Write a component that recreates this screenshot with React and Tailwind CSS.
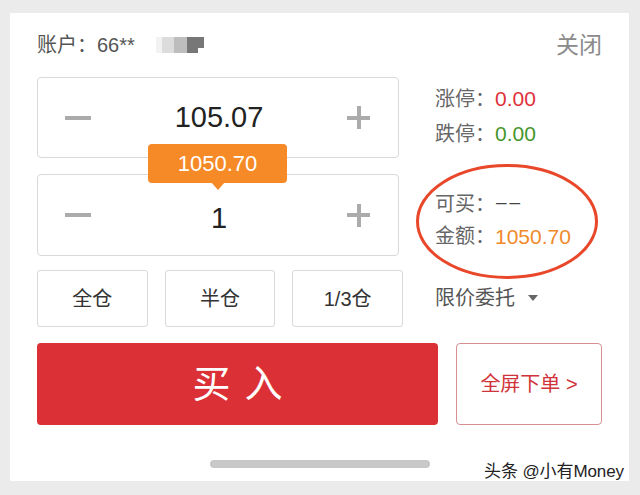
export default function App() {
  const font = { fontFamily: '"Liberation Sans", "Noto Sans CJK SC", sans-serif' };
  return (
    <div className="relative w-[640px] h-[495px] bg-[#ebebeb] pt-[13px] pl-[10px] overflow-hidden" style={font}>
      <div className="w-[619px] h-[468px] bg-white pl-[27px] pr-[27px] pt-[20px]">
        {/* header */}
        <div className="flex items-center h-[24px]">
          <span className="text-[20px] text-[#555] leading-none">账户：66**</span>
          <div className="ml-[21px] flex h-[16px]">
            <div className="w-[6px] bg-[#f2f2f2]" />
            <div className="w-[12px] bg-[#dcdcdc]" />
            <div className="w-[13px] bg-[#bdbdbd]" />
            <div className="w-[17px] bg-[#777] relative">
              <div className="absolute right-0 bottom-0 w-[6px] h-[5px] bg-white" />
            </div>
          </div>
          <span className="ml-auto text-[23px] text-[#8a8a8a] leading-none">关闭</span>
        </div>

        {/* main */}
        <div className="flex mt-[20px]">
          <div className="w-[366px] flex flex-col">
            <div className="relative w-[362px] h-[81px] border border-[#d9d9d9] rounded-[4px] flex items-center">
              <div className="ml-[27px] w-[26px] h-[4px] bg-[#ababab]" />
              <div className="flex-1 text-center text-[29px] text-[#222] leading-none">105.07</div>
              <div className="mr-[28px] relative w-[23px] h-[23px]">
                <div className="absolute left-0 top-[9.5px] w-[23px] h-[4px] bg-[#ababab]" />
                <div className="absolute top-0 left-[9.5px] w-[4px] h-[23px] bg-[#ababab]" />
              </div>
              {/* tooltip */}
              <div className="absolute left-[110px] top-[66px] w-[139px] h-[39px] bg-[#f68a26] rounded-[4px] flex items-center justify-center text-white text-[22px] leading-none z-10">
                1050.70
                <div className="absolute left-[63px] top-[38px] w-0 h-0 border-l-[7px] border-r-[7px] border-t-[8px] border-l-transparent border-r-transparent border-t-[#f68a26]" />
              </div>
            </div>
            <div className="mt-[16px] w-[362px] h-[82px] border border-[#d9d9d9] rounded-[4px] flex items-center">
              <div className="ml-[27px] w-[26px] h-[4px] bg-[#ababab]" />
              <div className="flex-1 text-center text-[29px] text-[#222] leading-none pt-[6px]">1</div>
              <div className="mr-[28px] relative w-[23px] h-[23px]">
                <div className="absolute left-0 top-[9.5px] w-[23px] h-[4px] bg-[#ababab]" />
                <div className="absolute top-0 left-[9.5px] w-[4px] h-[23px] bg-[#ababab]" />
              </div>
            </div>
            <div className="mt-[14px] grid grid-cols-3 gap-[17px] h-[57px]">
              {['全仓', '半仓', '1/3仓'].map((t) => (
                <div key={t} className="border border-[#d9d9d9] rounded-[3px] flex items-center justify-center text-[20px] text-[#333]">
                  {t}
                </div>
              ))}
            </div>
          </div>

          <div className="relative ml-[32px] flex flex-col text-[21px] leading-none">
            <div className="h-[35px] mt-[4px] flex items-center">
              <span className="text-[#666] text-[20px]">涨停：</span>
              <span className="text-[#e0313b]">0.00</span>
            </div>
            <div className="h-[35px] flex items-center">
              <span className="text-[#666] text-[20px]">跌停：</span>
              <span className="text-[#46962c]">0.00</span>
            </div>
            <div className="h-[32px] mt-[37px] flex items-center">
              <span className="text-[#666] text-[20px]">可买：</span>
              <span className="text-[#444] text-[19px] tracking-[3px] ml-[1px] pb-[6px]">––</span>
            </div>
            <div className="h-[32px] flex items-center">
              <span className="text-[#666] text-[20px]">金额：</span>
              <span className="text-[#f08a2b]">1050.70</span>
            </div>
            <div className="h-[32px] mt-[30px] flex items-center">
              <span className="text-[#555] text-[20px]">限价委托</span>
              <div className="ml-[13px] w-0 h-0 border-l-[5px] border-r-[5px] border-t-[6px] border-l-transparent border-r-transparent border-t-[#666]" />
            </div>
            <svg className="absolute left-[-20px] top-[86px]" width="184" height="117" viewBox="0 0 184 117">
              <ellipse cx="92" cy="58.5" rx="89.5" ry="56" fill="none" stroke="#e8472a" strokeWidth="3" />
            </svg>
          </div>
        </div>

        {/* buy row */}
        <div className="flex mt-[16px] h-[82px]">
          <div className="w-[401px] bg-[#dc3037] rounded-[4px] flex items-center justify-center text-white text-[38px] tracking-[14px] pl-[14px]">
            买入
          </div>
          <div className="ml-[18px] w-[146px] border border-[#d98f92] rounded-[4px] flex items-center justify-center text-[20px] text-[#d0333a]">
            全屏下单 &gt;
          </div>
        </div>

        <div className="mt-[35px] ml-[173px] w-[220px] h-[8px] rounded-full bg-[#c8c8c8]" />
      </div>

      <div
        className="absolute left-[484px] top-[463px] text-[17px] text-[#222] leading-none tracking-[-0.1px]"
        style={{ textShadow: '0 0 2px #fff, 0 0 2px #fff, 0 0 1px #fff' }}
      >
        头条 @小有Money
      </div>
    </div>
  );
}
